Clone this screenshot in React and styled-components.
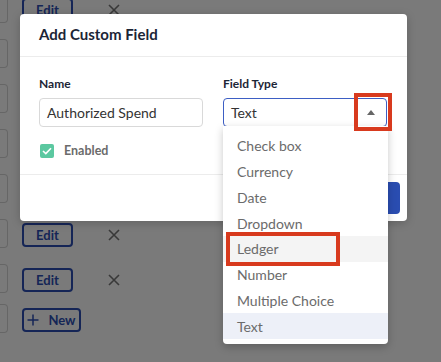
import styled, { createGlobalStyle } from "styled-components"

const GlobalStyle = createGlobalStyle`
  html, body {
    margin: 0;
    padding: 0;
  }
  body {
    font-family: Lato, "Open Sans", sans-serif;
  }
`

const Screen = styled.div`
  position: relative;
  width: 441px;
  height: 362px;
  overflow: hidden;
  background: #fff;
`

/* page behind the modal */
const FieldList = styled.div`
  display: flex;
  flex-direction: column;
  gap: 15px;
  margin-top: -7px;
`
const FieldRow = styled.div`
  display: flex;
  align-items: center;
  height: 30px;
  margin-top: ${p => p.$extra || 0}px;
`
const GhostInput = styled.div`
  width: 8px;
  height: 29px;
  box-sizing: border-box;
  border: 1px solid #d6d6d6;
  border-left: none;
  border-radius: 0 4px 4px 0;
`
const OutlineButton = styled.button`
  display: flex;
  align-items: center;
  justify-content: center;
  gap: 9px;
  width: ${p => p.$w}px;
  height: 24px;
  margin-left: 14px;
  margin-top: 4px;
  box-sizing: border-box;
  border: 2px solid #2c4fb5;
  border-radius: 4px;
  background: #fff;
  color: #2c4fb5;
  font-family: Lato, sans-serif;
  font-weight: 700;
  font-size: 13px;
  padding: 0;
`
const RemoveIcon = styled.span`
  display: flex;
  margin-left: 35px;
  margin-top: 4px;
  color: #777;
`

/* modal */
const Overlay = styled.div`
  position: absolute;
  inset: 0;
  background: rgba(0, 0, 0, 0.52);
  padding: 14px 0 0 20px;
`
const Modal = styled.div`
  width: 387px;
  height: 207px;
  background: #fff;
  border-radius: 4px;
  box-shadow: 0 2px 10px rgba(0, 0, 0, 0.2);
  display: flex;
  flex-direction: column;
`
const Header = styled.div`
  height: 43px;
  box-sizing: border-box;
  flex-shrink: 0;
  display: flex;
  align-items: center;
  padding: 0 19px 3px;
  border-bottom: 1px solid #ececec;
  font-size: 15px;
  font-weight: 700;
  color: #1c2536;
`
const Body = styled.div`
  height: 117px;
  flex-shrink: 0;
  box-sizing: border-box;
  display: grid;
  grid-template-columns: 164px 164px;
  column-gap: 20px;
  align-content: start;
  padding: 19px 20px 0 19px;
`
const Field = styled.div`
  display: flex;
  flex-direction: column;
  gap: 6px;
`
const Label = styled.label`
  font-size: 12px;
  line-height: 16px;
  font-weight: 700;
  color: #1c2536;
`
const TextInput = styled.div`
  height: 29px;
  box-sizing: border-box;
  border: 1px solid #d9d9d9;
  border-radius: 4px;
  display: flex;
  align-items: center;
  padding-left: 7px;
  font-size: 14px;
  color: #333;
`
const SelectBox = styled(TextInput)`
  position: relative;
  border-color: #3d5ec4;
`
const Caret = styled.span`
  position: absolute;
  right: 11px;
  top: 11px;
  width: 0;
  height: 0;
  border-left: 4px solid transparent;
  border-right: 4px solid transparent;
  border-bottom: 5px solid #666;
`
const Marker = styled.div`
  position: absolute;
  left: ${p => p.$x}px;
  top: ${p => p.$y}px;
  width: ${p => p.$w}px;
  height: ${p => p.$h}px;
  box-sizing: border-box;
  border: 4px solid #d83a1e;
  z-index: 3;
`
const Menu = styled.div`
  position: absolute;
  left: -1px;
  top: 100%;
  width: 165px;
  padding: 7px 0 5px;
  background: #fff;
  border-radius: 0 0 4px 4px;
  box-shadow: 0 3px 8px rgba(0, 0, 0, 0.22);
  z-index: 2;
`
const Option = styled.div`
  position: relative;
  height: 25.75px;
  display: flex;
  align-items: center;
  padding-left: 14px;
  font-size: 14px;
  color: #6b6b6b;
  background: ${p => (p.$selected ? "#edf0f8" : p.$hover ? "#f4f4f4" : "transparent")};
`
const CheckRow = styled.div`
  display: flex;
  align-items: center;
  gap: 10px;
  margin-top: 10px;
  padding-left: 1px;
  font-size: 12.5px;
  font-weight: 700;
  color: #6b6b6b;
`
const CheckBox = styled.span`
  width: 14px;
  height: 14px;
  border-radius: 2px;
  background: #5bc8a0;
  display: flex;
  align-items: center;
  justify-content: center;
`
const Footer = styled.div`
  flex: 1;
  display: flex;
  align-items: center;
  justify-content: flex-end;
  padding: 0 7px;
  border-top: 1px solid #ececec;
`
const PrimaryButton = styled.button`
  width: 70px;
  height: 32px;
  border: none;
  border-radius: 4px;
  background: #2a4db1;
  color: #fff;
  font-family: Lato, sans-serif;
  font-weight: 700;
  font-size: 13px;
`

const XMark = () => (
  <svg width="12" height="12" viewBox="0 0 12 12">
    <path d="M1 1L11 11M11 1L1 11" stroke="currentColor" strokeWidth="1.6" fill="none" />
  </svg>
)

const options = ["Check box", "Currency", "Date", "Dropdown", "Ledger", "Number", "Multiple Choice", "Text"]

// rows of the page behind; the middle ones sit under the modal, only their inputs' edges show
const rows = [true, false, false, false, false, true, true]

const App = () => {
  return (
    <Screen>
      <GlobalStyle />
      <FieldList>
        {rows.map((visible, i) => (
          <FieldRow key={i}>
            <GhostInput />
            {visible && (
              <>
                <OutlineButton $w={51}>Edit</OutlineButton>
                <RemoveIcon><XMark /></RemoveIcon>
              </>
            )}
          </FieldRow>
        ))}
        <FieldRow $extra={-5}>
          <GhostInput />
          <OutlineButton $w={59}>
            <svg width="12" height="12" viewBox="0 0 12 12">
              <path d="M6 0.5V11.5M0.5 6H11.5" stroke="currentColor" strokeWidth="1.5" />
            </svg>
            New
          </OutlineButton>
        </FieldRow>
      </FieldList>

      <Overlay>
        <Modal>
          <Header>Add Custom Field</Header>
          <Body>
            <Field>
              <Label>Name</Label>
              <TextInput>Authorized Spend</TextInput>
              <CheckRow>
                <CheckBox>
                  <svg width="10" height="8" viewBox="0 0 10 8">
                    <path d="M1 4L3.8 6.6L9 1.2" stroke="#fff" strokeWidth="1.6" fill="none" />
                  </svg>
                </CheckBox>
                Enabled
              </CheckRow>
            </Field>
            <Field>
              <Label>Field Type</Label>
              <SelectBox>
                Text
                <Caret />
                <Marker $x={130} $y={-6} $w={38} $h={38} />
                <Menu>
                  {options.map(o => (
                    <Option key={o} $selected={o === "Text"} $hover={o === "Ledger"}>
                      {o}
                      {o === "Ledger" && <Marker $x={3} $y={-4} $w={114} $h={34} />}
                    </Option>
                  ))}
                </Menu>
              </SelectBox>
            </Field>
          </Body>
          <Footer>
            <PrimaryButton>Save</PrimaryButton>
          </Footer>
        </Modal>
      </Overlay>
    </Screen>
  )
}

export default App
